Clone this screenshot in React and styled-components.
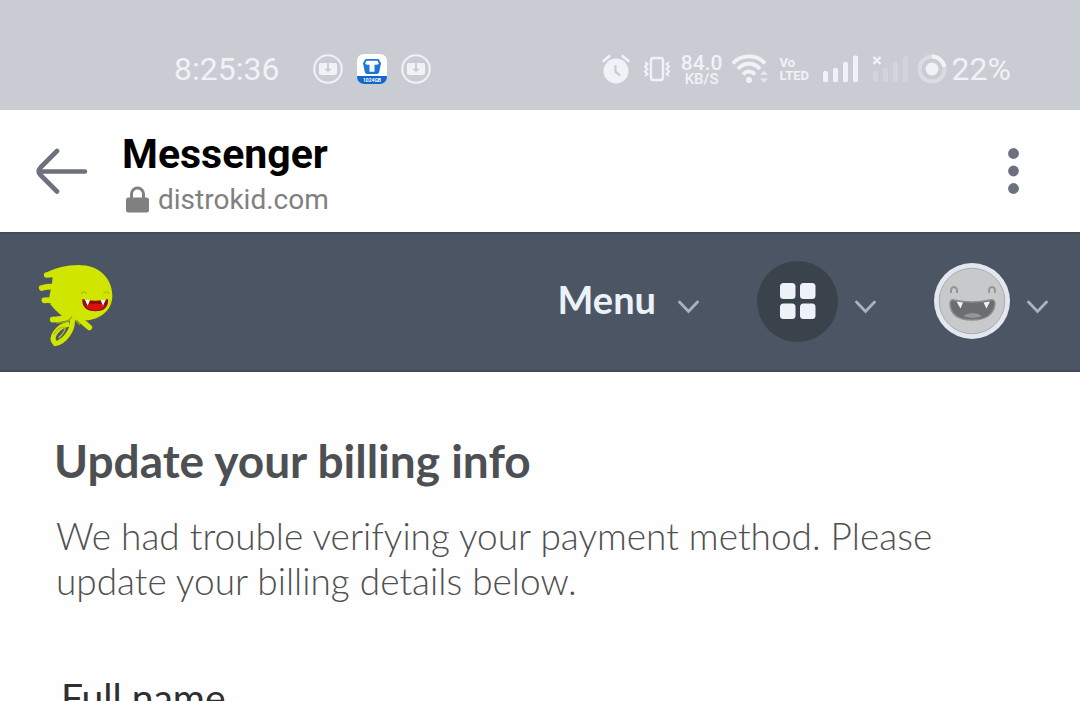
import React, { useState } from 'react';
import styled, { createGlobalStyle } from 'styled-components';

const GlobalStyle = createGlobalStyle`
  * {
    box-sizing: border-box;
  }

  body {
    margin: 0;
    background: #fefefe;
    scrollbar-width: none;
  }

  button {
    padding: 0;
    border: 0;
    background: none;
    font: inherit;
    cursor: pointer;
  }

  svg {
    display: block;
    flex: none;
  }
`;

// Styled Components
const Page = styled.div`
  height: 100vh;
  overflow: hidden auto;
  scrollbar-width: none;
  font-family: 'Lato', sans-serif;
`;

/* Phone status bar */
const StatusBar = styled.div`
  display: flex;
  justify-content: space-between;
  padding: 49px 69px 21px 174px;
  background: #c9ccd3;
  color: #f0f2f7;
  font-family: 'Roboto', sans-serif;
  font-size: 32px;
  line-height: 40px;
`;

const StatusGroup = styled.div`
  display: flex;
  align-items: center;
  gap: ${({ $gap }) => $gap}px;
`;

const Clock = styled.span`
  margin-right: 20px;
`;

const Speed = styled.span`
  display: flex;
  flex-direction: column;
  align-items: center;
  width: 40px;
  padding-top: 4px;
  font-size: 21px;
  font-weight: 500;
  line-height: 17px;
`;

const SpeedUnit = styled.span`
  font-size: 15px;
  line-height: 15px;
`;

const Volte = styled.span`
  display: flex;
  flex-direction: column;
  width: 32px;
  font-size: 13px;
  font-weight: 700;
  line-height: 13px;
`;

/* In-app browser header */
const BrowserBar = styled.header`
  display: flex;
  align-items: center;
  min-height: 122px;
  padding: 0 60px 0 34px;
  background: #fff;
  font-family: 'Roboto', sans-serif;
`;

const SiteInfo = styled.div`
  flex: 1;
  padding: 20px 0 10px 34px;
`;

const AppName = styled.div`
  color: #000;
  font-size: 41px;
  font-weight: 700;
  line-height: 48px;
`;

const Domain = styled.div`
  display: flex;
  align-items: center;
  gap: 9px;
  padding-left: 4px;
  color: #808080;
  font-size: 28px;
  line-height: 44px;
`;

/* Site navigation */
const NavBar = styled.nav`
  display: flex;
  align-items: center;
  justify-content: space-between;
  min-height: 140px;
  padding: 0 32px 2px 34px;
  border-top: 2px solid #424b56;
  border-bottom: 2px solid #424a56;
  background: #4c5564;
`;

const NavItems = styled.div`
  display: flex;
  align-items: center;
  gap: 58px;
`;

const NavButton = styled.button`
  display: flex;
  align-items: center;
  gap: ${({ $gap }) => $gap || 17}px;
  color: #edf1f8;
`;

const MenuLabel = styled.span`
  padding-bottom: 4px;
  font-size: 38px;
  font-weight: 700;
  line-height: 48px;
`;

const GridCircle = styled.span`
  display: flex;
  align-items: center;
  justify-content: center;
  width: 81px;
  height: 81px;
  border-radius: 50%;
  background: #3a434b;
`;

/* Billing form */
const Content = styled.main`
  padding: 59px 54px;
`;

const Title = styled.h1`
  margin: 0;
  color: #4d5053;
  font-size: 46px;
  font-weight: 700;
  line-height: 60px;
`;

const Message = styled.p`
  margin: 22px 0 0;
  padding: 0 2px;
  color: #505050;
  font-size: 37px;
  font-weight: 300;
  line-height: 45px;
`;

const Field = styled.div`
  display: flex;
  flex-direction: column;
  gap: 12px;
  margin-top: 72px;
  padding: 0 7px;
`;

const Label = styled.label`
  color: #2d2f31;
  font-size: 39px;
  line-height: 45px;
`;

const Input = styled.input`
  height: 90px;
  padding: 0 24px;
  border: 2px solid #c9ccd3;
  border-radius: 8px;
  font: inherit;
  font-size: 37px;
`;

// Icons
const DownloadIcon = () => (
  <svg width="30" height="30" viewBox="0 0 30 30" fill="none">
    <circle cx="15" cy="15" r="13.8" stroke="#f0f2f7" strokeWidth="2" />
    <rect x="6" y="9" width="18" height="12" rx="2" fill="#f0f2f7" />
    <path d="M15 9v7" stroke="#c9ccd3" strokeWidth="1.800" />
    <path d="M11.500 14.500h7L15 18.500z" fill="#c9ccd3" />
  </svg>
);

const StorageIcon = () => (
  <svg width="30" height="30" viewBox="0 0 30 30">
    <rect width="30" height="30" rx="7" fill="#fff" />
    <path d="M0 22h30v1a7 7 0 0 1-7 7H7a7 7 0 0 1-7-7z" fill="#1467c8" />
    <path d="M8.500 5h13l2.500 4-1.800 9q-.5 2-2.500 2h-9.400q-2 0-2.500-2L6 9z" fill="#1b78d6" />
    <path d="M9.500 6.800h11l1.300 2.400q-.5 1.600-2.300 1.600h-2v7h-5v-7h-2q-1.800 0-2.300-1.600z" fill="#fff" />
    <text x="15" y="28" textAnchor="middle" fill="#fff" fontSize="5" fontWeight="700">
      1024GB
    </text>
  </svg>
);

const AlarmIcon = () => (
  <svg width="30" height="30" viewBox="0 0 30 30" fill="none">
    <circle cx="14" cy="17" r="12.500" fill="#f0f2f7" />
    <path d="M1.500 7L7.500 2M26.500 7L20.500 2" stroke="#f0f2f7" strokeWidth="2.600" strokeLinecap="round" />
    <path d="M13.500 12v6l4 3" stroke="#c9ccd3" strokeWidth="2.200" strokeLinecap="round" />
  </svg>
);

const VibrateIcon = () => (
  <svg width="30" height="30" viewBox="0 0 30 30" fill="none" stroke="#f0f2f7">
    <rect x="9" y="4" width="12" height="22" rx="2.500" strokeWidth="2.400" />
    <path d="M3 8l2.500 2L3 12.500 5.500 15 3 17.500 5.500 20 3 22M27 8l-2.500 2 2.500 2.500-2.500 2.500 2.500 2.500-2.500 2.500 2.500 2" strokeWidth="2" />
  </svg>
);

const WifiIcon = () => (
  <svg width="38" height="32" viewBox="0 0 38 32" fill="none">
    <g stroke="#f0f2f7" strokeWidth="3.800">
      <path d="M1 10.500C9 1 25 1 33 10.500" />
      <path d="M6 16C12 9 22 9 28 16" />
      <path d="M11 21.500C14.500 17.500 19.500 17.500 23 21.500" />
    </g>
    <circle cx="17" cy="27" r="3" fill="#f0f2f7" />
    <path d="M28 22l4-4.500 4 4.500zM28 25.500l4 4.500 4-4.500z" fill="#e3e6ec" />
  </svg>
);

const SignalIcon = ({ faded }) => (
  <svg width={faded ? 36 : 40} height="30" viewBox={`0 0 ${faded ? 36 : 40} 30`}>
    <g fill={faded ? '#d1d4da' : '#f0f2f7'}>
      <rect x="1" y="17" width="5" height="11" rx="1.500" />
      <rect x="11" y="14" width="5" height="14" rx="1.500" />
      <rect x="21" y="8" width="5" height="20" rx="1.500" />
      <rect x="31" y="1.500" width="5" height="26.500" rx="1.500" />
    </g>
    {faded && <path d="M1.500 3l7 7M8.500 3l-7 7" stroke="#f0f2f7" strokeWidth="2.400" />}
  </svg>
);

const BatteryIcon = () => (
  <svg width="30" height="30" viewBox="0 0 30 30" fill="none">
    <circle cx="14" cy="15" r="12.500" stroke="#d9dce1" strokeWidth="4" />
    <path d="M14 2.500A12.500 12.500 0 0 1 26.300 12.800" stroke="#f0f2f7" strokeWidth="4" />
    <circle cx="14" cy="15" r="6.500" fill="#f0f2f7" />
  </svg>
);

const BackIcon = () => (
  <svg width="54" height="50" viewBox="0 0 54 50" fill="none" stroke="#6d717e" strokeWidth="4.600" strokeLinecap="round" strokeLinejoin="round">
    <path d="M51 25.500H5M23 5L6.500 21.500q-3.500 4 0 7.500L23 45.500" />
  </svg>
);

const DotsIcon = () => (
  <svg width="12" height="48" viewBox="0 0 12 48" fill="#6d717e">
    <circle cx="5.500" cy="6.500" r="5.400" />
    <circle cx="5.500" cy="24" r="5.400" />
    <circle cx="5.500" cy="41.500" r="5.400" />
  </svg>
);

const LockIcon = () => (
  <svg width="23" height="28" viewBox="0 0 23 28">
    <rect y="11.500" width="23" height="15" rx="2.500" fill="#808080" />
    <path d="M5.500 13V8a6 6 0 0 1 12 0V13" fill="none" stroke="#808080" strokeWidth="3" />
  </svg>
);

const ChevronIcon = () => (
  <svg width="21" height="26" viewBox="0 0 21 26" fill="none" stroke="#a9b2bf" strokeWidth="2.800" strokeLinecap="round">
    <path d="M1.500 14l9 9.500 9-9.500" />
  </svg>
);

const GridIcon = () => (
  <svg width="36" height="36" viewBox="0 0 36 36" fill="#edf1f8">
    <rect width="15.500" height="16" rx="3.500" />
    <rect x="20" width="15.500" height="16" rx="3.500" />
    <rect y="20.500" width="15.500" height="15.500" rx="3.500" />
    <rect x="20" y="20.500" width="15.500" height="15.500" rx="3.500" />
  </svg>
);

const LogoIcon = () => (
  <svg width="82" height="84" viewBox="42 57 246 252" fill="none" overflow="visible">
    <path
      d="M80 97Q120 76 175 75C238 75 276 115 277 165C278 205 250 234 205 241L150 243Q118 226 92 194L88 170L92 150L96 130L98 108z"
      fill="#d0e500"
    />
    {/* fingers and foot */}
    <path
      d="M80 105L130 100M65 144Q90 137 130 142M73 181Q95 178 130 190M98 239Q120 238 150 230M182 240L208 262"
      stroke="#d0e500"
      strokeWidth="17"
      strokeLinecap="round"
    />
    {/* tail */}
    <path d="M157 240C160 268 136 304 106 311Q92 298 106 278Q122 256 148 252" stroke="#d0e500" strokeWidth="15" strokeLinejoin="round" />
    <path d="M102 284Q114 260 134 262Q140 270 116 294" stroke="#aebd2a" strokeWidth="4" />
    <path d="M108 248Q142 252 156 230M180 254L166 240" stroke="#98aa18" strokeWidth="4" />
    <path d="M184 160Q192 151 199 160M252 160Q259 151 266 160" stroke="#b3c80e" strokeWidth="5" strokeLinecap="round" />
    <path d="M187 177Q225 187 264 177Q267 213 226 214Q185 213 187 177z" fill="#8e0d06" />
    <path d="M196 197Q226 184 256 197Q246 211 226 211Q206 211 196 197z" fill="#d81010" />
    <path d="M194 178l16 3-7 16zM242 181l16-3-9 19z" fill="#fff" />
  </svg>
);

const AvatarIcon = () => (
  <svg width="76" height="76" viewBox="0 0 76 76" fill="none">
    <circle cx="38" cy="38" r="38" fill="#e3e8f0" />
    <circle cx="38" cy="38" r="32.800" fill="#c7c9ca" stroke="#a9adb0" strokeWidth="1" />
    <path d="M17 30q-.5-6 3-6t3 6M55 30q-.5-6 3-6t3 6" stroke="#929595" strokeWidth="2" />
    <path d="M20 37q18 4 36 0 5-1 5 4-2 16-23 16T16 41q0-5 4-4z" fill="#6b6d6e" stroke="#8c8f90" strokeWidth="1.500" />
    <path d="M29 53q10-6 19 0-9 4-19 0z" fill="#949697" />
    <path d="M22.500 38.500l6.500 1-2.500 6zM49.500 39.500l6.500-1-3.500 7z" fill="#f1f2f3" />
  </svg>
);

// BillingPage Component
const App = () => {
  const [name, setName] = useState('');

  return (
    <Page>
      <GlobalStyle />
      <StatusBar>
        <StatusGroup $gap={14}>
          <Clock>8:25:36</Clock>
          <DownloadIcon />
          <StorageIcon />
          <DownloadIcon />
        </StatusGroup>
        <StatusGroup $gap={10}>
          <AlarmIcon />
          <VibrateIcon />
          <Speed>
            84.0
            <SpeedUnit>KB/S</SpeedUnit>
          </Speed>
          <WifiIcon />
          <Volte>
            <span>Vo</span>
            <span>LTED</span>
          </Volte>
          <SignalIcon />
          <SignalIcon faded />
          <StatusGroup $gap={4}>
            <BatteryIcon />
            <span>22%</span>
          </StatusGroup>
        </StatusGroup>
      </StatusBar>

      <BrowserBar>
        <button type="button" aria-label="Back">
          <BackIcon />
        </button>
        <SiteInfo>
          <AppName>Messenger</AppName>
          <Domain>
            <LockIcon />
            distrokid.com
          </Domain>
        </SiteInfo>
        <button type="button" aria-label="More options">
          <DotsIcon />
        </button>
      </BrowserBar>

      <NavBar>
        <a href="#home" aria-label="Home">
          <LogoIcon />
        </a>
        <NavItems>
          <NavButton type="button" $gap={22}>
            <MenuLabel>Menu</MenuLabel>
            <ChevronIcon />
          </NavButton>
          <NavButton type="button" aria-label="Apps">
            <GridCircle>
              <GridIcon />
            </GridCircle>
            <ChevronIcon />
          </NavButton>
          <NavButton type="button" aria-label="Account">
            <AvatarIcon />
            <ChevronIcon />
          </NavButton>
        </NavItems>
      </NavBar>

      <Content>
        <Title>Update your billing info</Title>
        <Message>
          We had trouble verifying your payment method. Please update your billing details below.
        </Message>
        <Field>
          <Label htmlFor="full-name">Full name</Label>
          <Input id="full-name" type="text" value={name} onChange={(e) => setName(e.target.value)} />
        </Field>
      </Content>
    </Page>
  );
};

export default App;
